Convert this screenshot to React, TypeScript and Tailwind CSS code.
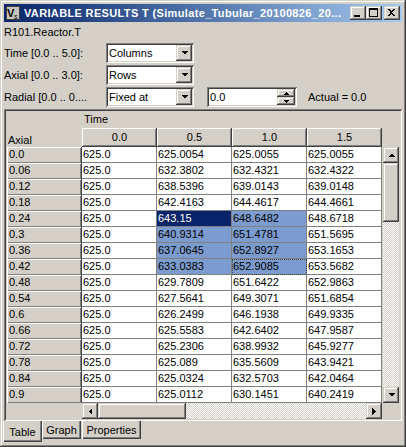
import React from "react";

const raised =
  "shadow-[inset_-1px_-1px_#404040,inset_1px_1px_#d4d0c8,inset_-2px_-2px_#808080,inset_2px_2px_#ffffff]";
const sunken =
  "shadow-[inset_1px_1px_#808080,inset_-1px_-1px_#ffffff,inset_2px_2px_#404040,inset_-2px_-2px_#d4d0c8]";
const dither =
  "bg-[repeating-conic-gradient(#ffffff_0_25%,#d4d0c8_0_50%)] bg-[length:2px_2px]";

const rows = [
  ["0.0", "625.0", "625.0054", "625.0055", "625.0055"],
  ["0.06", "625.0", "632.3802", "632.4321", "632.4322"],
  ["0.12", "625.0", "638.5396", "639.0143", "639.0148"],
  ["0.18", "625.0", "642.4163", "644.4617", "644.4661"],
  ["0.24", "625.0", "643.15", "648.6482", "648.6718"],
  ["0.3", "625.0", "640.9314", "651.4781", "651.5695"],
  ["0.36", "625.0", "637.0645", "652.8927", "653.1653"],
  ["0.42", "625.0", "633.0383", "652.9085", "653.5682"],
  ["0.48", "625.0", "629.7809", "651.6422", "652.9863"],
  ["0.54", "625.0", "627.5641", "649.3071", "651.6854"],
  ["0.6", "625.0", "626.2499", "646.1938", "649.9335"],
  ["0.66", "625.0", "625.5583", "642.6402", "647.9587"],
  ["0.72", "625.0", "625.2306", "638.9932", "645.9277"],
  ["0.78", "625.0", "625.089", "635.5609", "643.9421"],
  ["0.84", "625.0", "625.0324", "632.5703", "642.0464"],
  ["0.9", "625.0", "625.0112", "630.1451", "640.2419"],
];

const cols = ["0.0", "0.5", "1.0", "1.5"];

function Arrow({ dir }: { dir: "up" | "down" | "left" | "right" }) {
  const pts = {
    up: "0,4 7,4 3.5,0.5",
    down: "0,0 7,0 3.5,3.5",
    left: "4,0 4,7 0.5,3.5",
    right: "0,0 0,7 3.5,3.5",
  }[dir];
  const vertical = dir === "up" || dir === "down";
  return (
    <svg width={vertical ? 7 : 4} height={vertical ? 4 : 7} shapeRendering="crispEdges">
      <polygon points={pts} fill="#000" />
    </svg>
  );
}

function SmallArrow({ dir }: { dir: "up" | "down" }) {
  return (
    <svg width="5" height="3" shapeRendering="crispEdges">
      <polygon points={dir === "up" ? "0,3 5,3 2.5,0" : "0,0 5,0 2.5,3"} fill="#000" />
    </svg>
  );
}

function Combo({ value }: { value: string }) {
  return (
    <div className={`flex h-[20px] w-[88px] items-center bg-white p-[2px] ${sunken}`}>
      <span className="flex-1 pl-[1px] text-[11px] leading-[13px]">{value}</span>
      <div className={`flex h-[16px] w-[16px] items-center justify-center bg-[#d4d0c8] ${raised}`}>
        <Arrow dir="down" />
      </div>
    </div>
  );
}

function TitleButton({ kind }: { kind: "min" | "max" | "close" }) {
  return (
    <div className={`flex h-[14px] w-[16px] bg-[#d4d0c8] ${raised}`}>
      <svg width="16" height="14" shapeRendering="crispEdges">
        {kind === "min" && <rect x="4" y="9" width="6" height="2" fill="#000" />}
        {kind === "max" && (
          <>
            <rect x="3" y="2" width="9" height="2" fill="#000" />
            <rect x="3" y="2" width="1" height="9" fill="#000" />
            <rect x="11" y="2" width="1" height="9" fill="#000" />
            <rect x="3" y="10" width="9" height="1" fill="#000" />
          </>
        )}
        {kind === "close" && (
          <path d="M4 3h2l1.5 2 1.5-2h2l-2.5 3.5 2.5 3.5h-2l-1.5-2-1.5 2h-2l2.5-3.5z" fill="#000" />
        )}
      </svg>
    </div>
  );
}

function ScrollBtn({ dir }: { dir: "up" | "down" | "left" | "right" }) {
  return (
    <div className={`flex h-[16px] w-[16px] shrink-0 items-center justify-center bg-[#d4d0c8] ${raised}`}>
      <Arrow dir={dir} />
    </div>
  );
}

function cellClass(r: number, c: number) {
  if (r === 4 && c === 1) return "bg-[#0a246a] text-white";
  if (r >= 4 && r <= 7 && (c === 1 || c === 2)) return "bg-[#7c9bce] text-black";
  return "bg-white text-black";
}

export default function App() {
  return (
    <div
      className={`flex h-[447px] w-[406px] flex-col bg-[#d4d0c8] p-[4px] font-['Liberation_Sans',Arial,sans-serif] text-black ${raised}`}
    >
      {/* title bar */}
      <div className="flex h-[18px] shrink-0 items-center bg-linear-to-r from-[#0a246a] to-[#a6caf0] pr-[2px]">
        <svg width="16" height="16" className="ml-[1px] shrink-0">
          <rect x="1.5" y="1.5" width="13" height="13" fill="#c8c4bc" stroke="#404040" />
          <text x="2" y="12" fontSize="11" fontWeight="bold" fill="#000" fontFamily="Liberation Sans">V</text>
          <text x="9" y="14" fontSize="7" fill="#000" fontFamily="Liberation Sans">s</text>
        </svg>
        <span className="ml-[3px] flex-1 overflow-hidden whitespace-nowrap text-[11px] font-bold leading-[13px] tracking-[0.35px] text-white">
          VARIABLE RESULTS T (Simulate_Tubular_20100826_20...
        </span>
        <TitleButton kind="min" />
        <TitleButton kind="max" />
        <div className="w-[2px]" />
        <TitleButton kind="close" />
      </div>

      {/* controls */}
      <div className="flex h-[21px] shrink-0 items-center text-[11px] leading-[13px]">R101.Reactor.T</div>
      <div className="flex flex-col gap-[2px] text-[11px] leading-[13px]">
        <div className="flex h-[20px] items-center">
          <span className="w-[102px]">Time [0.0 .. 5.0]:</span>
          <Combo value="Columns" />
        </div>
        <div className="flex h-[20px] items-center">
          <span className="w-[102px]">Axial [0.0 .. 3.0]:</span>
          <Combo value="Rows" />
        </div>
        <div className="flex h-[20px] items-center">
          <span className="w-[102px]">Radial [0.0 .. 0....</span>
          <Combo value="Fixed at" />
          <div className={`ml-[13px] flex h-[20px] w-[90px] items-center bg-white p-[2px] ${sunken}`}>
            <span className="flex-1 pl-[1px]">0.0</span>
            <div className="flex flex-col">
              <div className={`flex h-[8px] w-[18px] items-center justify-center bg-[#d4d0c8] ${raised}`}>
                <SmallArrow dir="up" />
              </div>
              <div className={`flex h-[8px] w-[18px] items-center justify-center bg-[#d4d0c8] ${raised}`}>
                <SmallArrow dir="down" />
              </div>
            </div>
          </div>
          <span className="ml-[11px]">Actual = 0.0</span>
        </div>
      </div>

      {/* table panel */}
      <div className={`mt-[2px] flex h-[312px] shrink-0 flex-col px-[3px] pt-[2px] pb-[2px] text-[11px] leading-[15px] ${sunken}`}>
        <div className="flex h-[17px] items-center">
          <div className="w-[75px]" />
          <span className="pl-[2px]">Time</span>
        </div>
        <div className="flex h-[19px]">
          <div className="flex w-[75px] items-end pl-[1px] leading-[13px]">Axial</div>
          {cols.map((c) => (
            <div
              key={c}
              className="flex h-[19px] w-[75px] items-center justify-center bg-[#d4d0c8] shadow-[inset_-1px_-1px_#404040,inset_1px_1px_#ffffff,inset_-2px_-2px_#808080]"
            >
              {c}
            </div>
          ))}
        </div>
        <div className="flex h-[256px]">
          <div className="flex flex-col">
            {rows.map((row, r) => (
              <div key={row[0]} className="flex h-[16px]">
                <div className="h-[16px] w-[74px] bg-[#d4d0c8] pl-[2px] shadow-[inset_1px_1px_#ffffff,inset_-1px_-1px_#808080]">
                  {row[0]}
                </div>
                <div className="h-[16px] w-[1px] bg-[#404040]" />
                {row.slice(1).map((v, c) => (
                  <div
                    key={c}
                    className={`h-[16px] w-[75px] border-r border-b border-[#808080] pl-[1px] ${cellClass(r, c)} ${
                      r === 7 && c === 2 ? "outline-1 -outline-offset-1 outline-dotted outline-[#404040]" : ""
                    }`}
                  >
                    {v}
                  </div>
                ))}
              </div>
            ))}
          </div>
          <div className="ml-[1px] flex w-[16px] flex-col">
            <ScrollBtn dir="up" />
            <div className={`h-[59px] w-[16px] shrink-0 bg-[#d4d0c8] ${raised}`} />
            <div className={`flex-1 ${dither}`} />
            <ScrollBtn dir="down" />
          </div>
        </div>
        <div className="flex h-[16px]">
          <div className="w-[75px]" />
          <div className="flex w-[300px]">
            <ScrollBtn dir="left" />
            <div className={`h-[16px] w-[88px] shrink-0 bg-[#d4d0c8] ${raised}`} />
            <div className={`flex-1 ${dither}`} />
            <ScrollBtn dir="right" />
          </div>
        </div>
      </div>

      {/* tabs */}
      <div className="flex h-[22px] items-start text-[11px] leading-[13px]">
        <div className="-ml-[1px] flex h-[21px] w-[39px] items-center justify-center pt-[2px] shadow-[inset_1px_0_#ffffff,inset_-1px_-1px_#404040,inset_-2px_-2px_#808080]">
          Table
        </div>
        <div className="flex h-[18px] w-[39px] items-center justify-center shadow-[inset_1px_0_#ffffff,inset_-1px_-1px_#404040,inset_-2px_-2px_#808080]">
          Graph
        </div>
        <div className="ml-[1px] flex h-[18px] w-[59px] items-center justify-center shadow-[inset_1px_0_#ffffff,inset_-1px_-1px_#404040,inset_-2px_-2px_#808080]">
          Properties
        </div>
      </div>
    </div>
  );
}
